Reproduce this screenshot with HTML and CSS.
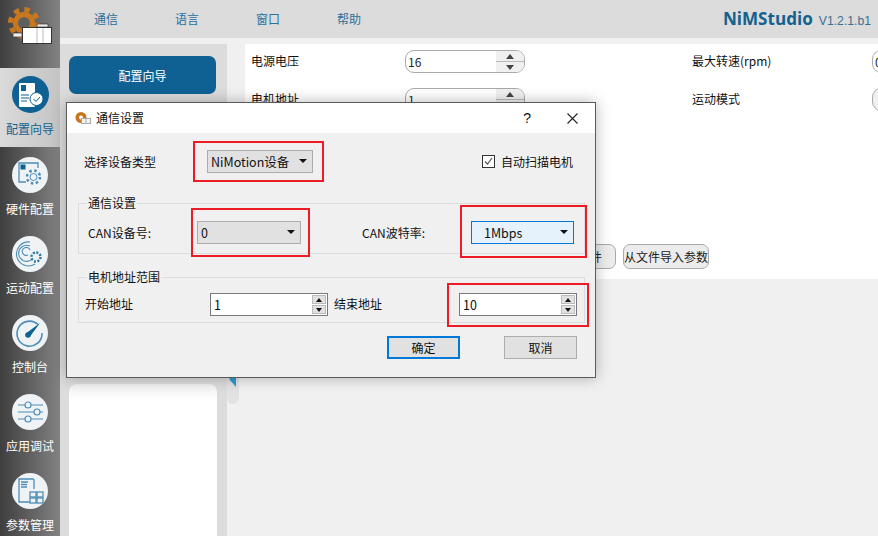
FILE: index.html
```html
<!DOCTYPE html>
<html lang="zh">
<head>
<meta charset="utf-8">
<title>NiMStudio</title>
<link rel="stylesheet" href="styles.css">
</head>
<body>
<div class="app">
  <aside class="sidebar">
    <div class="logo">
      <svg width="60" height="68" viewBox="0 0 60 68">
        <circle cx="24" cy="23" r="11" fill="#c9771f"/>
        <circle cx="24" cy="23" r="13.500" fill="none" stroke="#c9771f" stroke-width="5" stroke-dasharray="5.300 5.300"/>
        <circle cx="24" cy="23" r="6" fill="#5f5f5f"/>
        <rect x="13" y="33" width="9" height="4" fill="#eee" stroke="#333" stroke-width=".7"/>
        <rect x="37" y="24" width="11" height="3" fill="#eee" stroke="#333" stroke-width=".7"/>
        <rect x="22.500" y="27.500" width="29" height="16" fill="#fff" stroke="#333"/>
        <path d="M37 28v15M43 28v15" stroke="#bbb"/>
      </svg>
    </div>
    <div class="nav-item active">
      <span class="badge dark">
        <svg width="37" height="37" viewBox="0 0 37 37"><rect x="7" y="7" width="16" height="24" rx="1" fill="#fff"/><rect x="9" y="9" width="5" height="6" fill="#0f6194"/><path d="M9 19h8M9 22h8M9 25h6" stroke="#0f6194"/><circle cx="24.500" cy="23" r="6.500" fill="#fff" stroke="#0f6194"/><path d="M21.500 23l2.500 2.500 4-4.500" fill="none" stroke="#0f6194"/></svg>
      </span>
      <span class="nav-label">配置向导</span>
    </div>
    <div class="nav-item">
      <span class="badge">
        <svg width="36" height="36" viewBox="0 0 36 36"><path d="M14 25H7V6h19v5" fill="none" stroke="#4f8db5" stroke-width="1.300"/><rect x="8.500" y="7.500" width="5" height="5" fill="#0f6194"/><circle cx="21.500" cy="20" r="6.500" fill="#eff3f6" stroke="#4f8db5" stroke-width="2.500" stroke-dasharray="2.500 2.600"/><circle cx="21.500" cy="20" r="3.500" fill="none" stroke="#4f8db5"/></svg>
      </span>
      <span class="nav-label">硬件配置</span>
    </div>
    <div class="nav-item">
      <span class="badge">
        <svg width="36" height="36" viewBox="0 0 36 36"><g fill="none" stroke="#4f8db5" stroke-width="1.100"><path d="M23 28A12 12 0 1 1 18 6"/><path d="M19 24A8 8 0 1 1 18 10"/><path d="M16 19a4 4 0 1 1 2-5"/></g><circle cx="24" cy="21" r="6" fill="#eff3f6"/><circle cx="24" cy="21" r="4.500" fill="none" stroke="#2f78a6" stroke-width="2.500" stroke-dasharray="2 1.500"/></svg>
      </span>
      <span class="nav-label">运动配置</span>
    </div>
    <div class="nav-item">
      <span class="badge">
        <svg width="36" height="36" viewBox="0 0 36 36"><path d="M26 9.500A12.500 12.500 0 1 0 30 18" fill="none" stroke="#4f8db5" stroke-width="1.600"/><path d="M14.500 18L28 8 18 21.500z" fill="#0f6194"/><circle cx="16" cy="20" r="2.800" fill="#0f6194"/></svg>
      </span>
      <span class="nav-label">控制台</span>
    </div>
    <div class="nav-item">
      <span class="badge">
        <svg width="36" height="36" viewBox="0 0 36 36"><g fill="none" stroke="#4f8db5" stroke-width="1.200"><path d="M6 11h7M19 11h12M6 18h16M28 18h3M6 25h7M19 25h12"/><circle cx="16" cy="11" r="3"/><circle cx="25" cy="18" r="3"/><circle cx="16" cy="25" r="3"/></g></svg>
      </span>
      <span class="nav-label">应用调试</span>
    </div>
    <div class="nav-item">
      <span class="badge">
        <svg width="36" height="36" viewBox="0 0 36 36"><g fill="none" stroke="#4f8db5" stroke-width="1.300"><path d="M18 29H7V6h14a1 1 0 0 1 1 1v9"/><path d="M9 9h7M9 11.500h6M9 14h6"/><rect x="18" y="19" width="6" height="5"/><rect x="25" y="19" width="6" height="5"/><rect x="18" y="25" width="6" height="5"/><rect x="25" y="25" width="6" height="5"/></g></svg>
      </span>
      <span class="nav-label">参数管理</span>
    </div>
  </aside>
  <div class="main">
    <header class="topbar">
      <nav class="menu"><span>通信</span><span>语言</span><span>窗口</span><span>帮助</span></nav>
      <div class="brand"><b>NiMStudio</b><span>V1.2.1.b1</span></div>
    </header>
    <div class="content">
      <section class="left-col">
        <div class="wizard-btn">配置向导</div>
        <div class="white-card"></div>
      </section>
      <div class="splitter">
        <div class="handle"><svg width="7" height="15" viewBox="0 0 7 15"><path d="M7 0v15L0 7z" fill="#2b9bd8"/></svg></div>
      </div>
      <section class="right-col">
        <div class="params">
          <div class="param-row">
            <span class="param-name">电源电压</span>
            <span class="pill"><em>16</em><span class="pill-arrows"><i class="up"></i><i class="down"></i></span></span>
            <span class="param-name second">最大转速(rpm)</span>
            <span class="pill clipped"><em>0</em></span>
          </div>
          <div class="param-row">
            <span class="param-name">电机地址</span>
            <span class="pill"><em>1</em><span class="pill-arrows"><i class="up"></i><i class="down"></i></span></span>
            <span class="param-name second">运动模式</span>
            <span class="pill clipped blank"></span>
          </div>
          <div class="param-actions"><span class="ghost export">导出到文件</span><span class="ghost">从文件导入参数</span></div>
        </div>
      </section>
    </div>
  </div>
</div>

<div class="dialog">
  <div class="dlg-title">
    <svg class="dlg-icon" width="16" height="12" viewBox="0 0 16 12"><circle cx="6" cy="5.500" r="5.500" fill="#c9771f"/><circle cx="6" cy="5.500" r="2" fill="#fff"/><rect x="6.500" y="6.500" width="9" height="5" fill="#f4f4f4" stroke="#aaa"/><path d="M11 7v4" stroke="#aaa"/></svg>
    <span class="dlg-name">通信设置</span>
    <span class="dlg-help">?</span>
    <svg class="dlg-close" width="11" height="11" viewBox="0 0 11 11"><path d="M.5.5l10 10M10.500.5l-10 10" stroke="#222" stroke-width="1.100"/></svg>
  </div>
  <div class="dlg-body">
    <div class="row-type">
      <span class="lbl type-l">选择设备类型</span>
      <span class="combo type-combo mark">NiMotion设备<i class="caret"></i></span>
      <label class="auto"><span class="check"><svg width="11" height="11" viewBox="0 0 11 11"><path d="M2 5.500l2.500 2.500 4.500-6" fill="none" stroke="#555" stroke-width="1.200"/></svg></span>自动扫描电机</label>
    </div>
    <div class="grp comm">
      <span class="legend">通信设置</span>
      <span class="lbl can-lbl">CAN设备号:</span>
      <span class="combo dev-combo mark">0<i class="caret"></i></span>
      <span class="lbl can-lbl second-lbl">CAN波特率:</span>
      <span class="combo baud-combo mark">1Mbps<i class="caret"></i></span>
    </div>
    <div class="grp addr">
      <span class="legend">电机地址范围</span>
      <span class="lbl addr-lbl">开始地址</span>
      <span class="spin"><em>1</em><span class="spin-btns"><b><i class="up"></i></b><b><i class="down"></i></b></span></span>
      <span class="lbl addr-lbl end-lbl">结束地址</span>
      <span class="spin end-spin mark"><em>10</em><span class="spin-btns"><b><i class="up"></i></b><b><i class="down"></i></b></span></span>
    </div>
    <div class="dlg-actions">
      <span class="btn primary">确定</span>
      <span class="btn">取消</span>
    </div>
  </div>
</div>
</body>
</html>
```
FILE: styles.css
```css
* { box-sizing: border-box; }
html, body { margin: 0; height: 100%; }
body {
  width: 878px; height: 536px; overflow: hidden; position: relative;
  font-family: "Noto Sans CJK SC", "Liberation Sans", sans-serif;
  font-size: 12px; color: #222; background: #f0f0f0;
}
em { font-style: normal; }
.app { display: flex; width: 878px; height: 536px; }

.sidebar { width: 60px; flex: none; display: flex; flex-direction: column; background: linear-gradient(90deg, #3e3e3e, #828282); }
.logo { height: 68px; flex: none; }
.logo svg { display: block; }
.nav-item { height: 79px; flex: none; display: flex; flex-direction: column; align-items: center; padding-top: 10px; }
.nav-item.active { background: linear-gradient(90deg, #dadada, #c4c4c4); padding-top: 8px; }
.nav-item.active .nav-label { color: #14618f; }
.badge { width: 36px; height: 36px; border-radius: 50%; background: #eff3f6; display: flex; align-items: center; justify-content: center; flex: none; }
.badge.dark { width: 37px; height: 37px; background: #0f6194; }
.nav-label { margin-top: 7px; line-height: 17px; font-size: 12px; color: #fff; white-space: nowrap; }

.main { flex: 1; min-width: 0; display: flex; flex-direction: column; }
.topbar { height: 38px; flex: none; background: #dcdcdc; display: flex; align-items: center; justify-content: space-between; padding: 0 7px 2px 34px; }
.menu { display: flex; gap: 57px; color: #2a6f9b; font-size: 12px; }
.brand { display: flex; align-items: baseline; gap: 6px; color: #14618f; }
.brand b { font: bold 17.100px "Open Sans", "Liberation Sans", sans-serif; }
.brand span { font: 12.200px "Liberation Sans", sans-serif; color: #3d6f90; }

.content { flex: 1; display: flex; padding-top: 6px; min-height: 0; }
.left-col { width: 167px; flex: none; background: #dcdcdc; padding: 12px 10px 0 9px; display: flex; flex-direction: column; }
.wizard-btn { height: 38px; margin-right: 1px; background: #0f6194; border-radius: 7px; color: #fff; display: flex; align-items: center; justify-content: center; font-size: 12px; }
.white-card { margin-top: 290px; flex: 1; background: linear-gradient(#f0f0f0, #fff 16px); border-radius: 8px 8px 0 0; }
.splitter { width: 18px; flex: none; }
.handle { margin-top: 256px; width: 12px; height: 104px; background: #e2e2e2; border-radius: 0 0 6px 6px; padding: 72px 0 0 2px; }
.handle svg { display: block; }
.right-col { flex: 1; min-width: 0; overflow: hidden; }
.params { height: 235px; background: #fff; padding-top: 6px; }
.param-row { height: 38px; display: flex; align-items: flex-start; padding-left: 6px; }
.param-name { width: 154px; line-height: 22px; font-size: 12px; color: #111; flex: none; }
.param-name.second { width: 180px; margin-left: 167px; }
.pill { width: 120px; height: 23px; flex: none; border: 1px solid #aaa; border-radius: 9px; background: #fff; display: flex; justify-content: space-between; font-size: 12px; line-height: 21px; padding-left: 2px; overflow: hidden; }
.pill.clipped { width: 40px; }
.pill.blank { background: #f0f0f0; }
.pill-arrows { width: 28px; display: flex; flex-direction: column; }
.pill-arrows i { flex: 1; background: #f0f0f0; position: relative; }
.pill-arrows i.down { border-top: 1px solid #bbb; }
.pill-arrows i::after { content: ""; position: absolute; left: 10px; top: 3px; border-left: 4px solid transparent; border-right: 4px solid transparent; }
.pill-arrows .up::after { border-bottom: 5px solid #444; }
.pill-arrows .down::after { border-top: 5px solid #444; }
.param-actions { margin-top: 118px; padding-left: 271px; display: flex; gap: 7px; }
.ghost { height: 25px; padding: 0; border: 1px solid #aaa; border-radius: 7px; background: #ececec; font-size: 12px; line-height: 23px; white-space: nowrap; }
.ghost.export { width: 100px; padding-right: 13px; text-align: right; }

.dialog {
  position: absolute; left: 66px; top: 102px; width: 530px; height: 276px;
  border: 1px solid #5a5a5a; background: #f0f0f0; box-shadow: 0 0 14px rgba(0,0,0,.28);
}
.dlg-title { height: 30px; background: #fff; display: flex; align-items: center; padding: 0 17px 0 8px; font-size: 12px; color: #111; }
.dlg-name { margin-left: 5px; padding-bottom: 2px; }
.dlg-help { margin-left: auto; margin-right: 36px; font: 14px "Liberation Sans", sans-serif; }
.dlg-body { display: flex; flex-direction: column; }
.lbl { font-size: 12px; color: #111; line-height: 18px; white-space: nowrap; flex: none; }

.row-type { display: flex; align-items: center; height: 23px; margin-top: 17px; padding: 0 22px 0 17px; }
.type-l { width: 123px; }
.auto { margin-left: auto; display: flex; align-items: center; gap: 6px; font-size: 12px; color: #111; }
.check { width: 13px; height: 13px; border: 1px solid #333; background: #fff; display: flex; align-items: center; justify-content: center; }

.combo { position: relative; flex: none; display: flex; align-items: center; height: 23px; border: 1px solid #adadad; background: #e1e1e1; font-size: 12.500px; color: #111; white-space: nowrap; padding-left: 3px; }
.caret { position: absolute; right: 5px; top: 8px; border-left: 4px solid transparent; border-right: 4px solid transparent; border-top: 4px solid #111; }
.type-combo { width: 106px; }
.dev-combo { width: 104px; }
.baud-combo { width: 103px; border-color: #0078d7; background: #e5f1fb; padding-left: 12px; }

.mark::after { content: ""; position: absolute; border: 2px solid #ed1c24; pointer-events: none; }
.type-combo::after { inset: -10px -12px -10px -15px; }
.dev-combo::after { inset: -14px -10px -14px -7px; }
.baud-combo::after { inset: -17px -14px -15px -12px; }
.end-spin::after { inset: -11px -13px -12px -13px; }

.grp { position: relative; display: flex; margin-left: 11px; width: 507px; border: 1px solid #dcdcdc; }
.legend { position: absolute; left: 8px; top: -9px; padding: 0 1px; background: #f0f0f0; font-size: 12px; line-height: 16px; color: #111; }
.comm { margin-top: 30px; height: 51px; padding: 17px 0 0 9px; }
.can-lbl { width: 109px; line-height: 23px; }
.second-lbl { margin-left: 61px; }
.addr { margin-top: 23px; height: 46px; padding: 15px 0 0 6px; }
.addr-lbl { width: 125px; line-height: 22px; }
.end-lbl { margin-left: 6px; }

.spin { position: relative; flex: none; display: flex; align-items: center; width: 118px; height: 23px; border: 1px solid #7a7a7a; background: #fff; font-size: 12.500px; padding: 0 1px 0 3px; justify-content: space-between; color: #111; }
.spin-btns { width: 14px; display: flex; flex-direction: column; gap: 1px; }
.spin-btns b { display: block; height: 9px; background: #e1e1e1; border: 1px solid #bbb; position: relative; }
.spin-btns i { position: absolute; left: 3px; top: 2px; border-left: 3px solid transparent; border-right: 3px solid transparent; }
.spin-btns .up { border-bottom: 4px solid #111; }
.spin-btns .down { border-top: 4px solid #111; }

.dlg-actions { margin-top: 13px; padding-left: 320px; display: flex; gap: 44px; }
.btn { width: 73px; height: 23px; border: 1px solid #adadad; background: #e1e1e1; display: flex; align-items: center; justify-content: center; font-size: 12px; color: #111; }
.btn.primary { border: 2px solid #0078d7; }
```
